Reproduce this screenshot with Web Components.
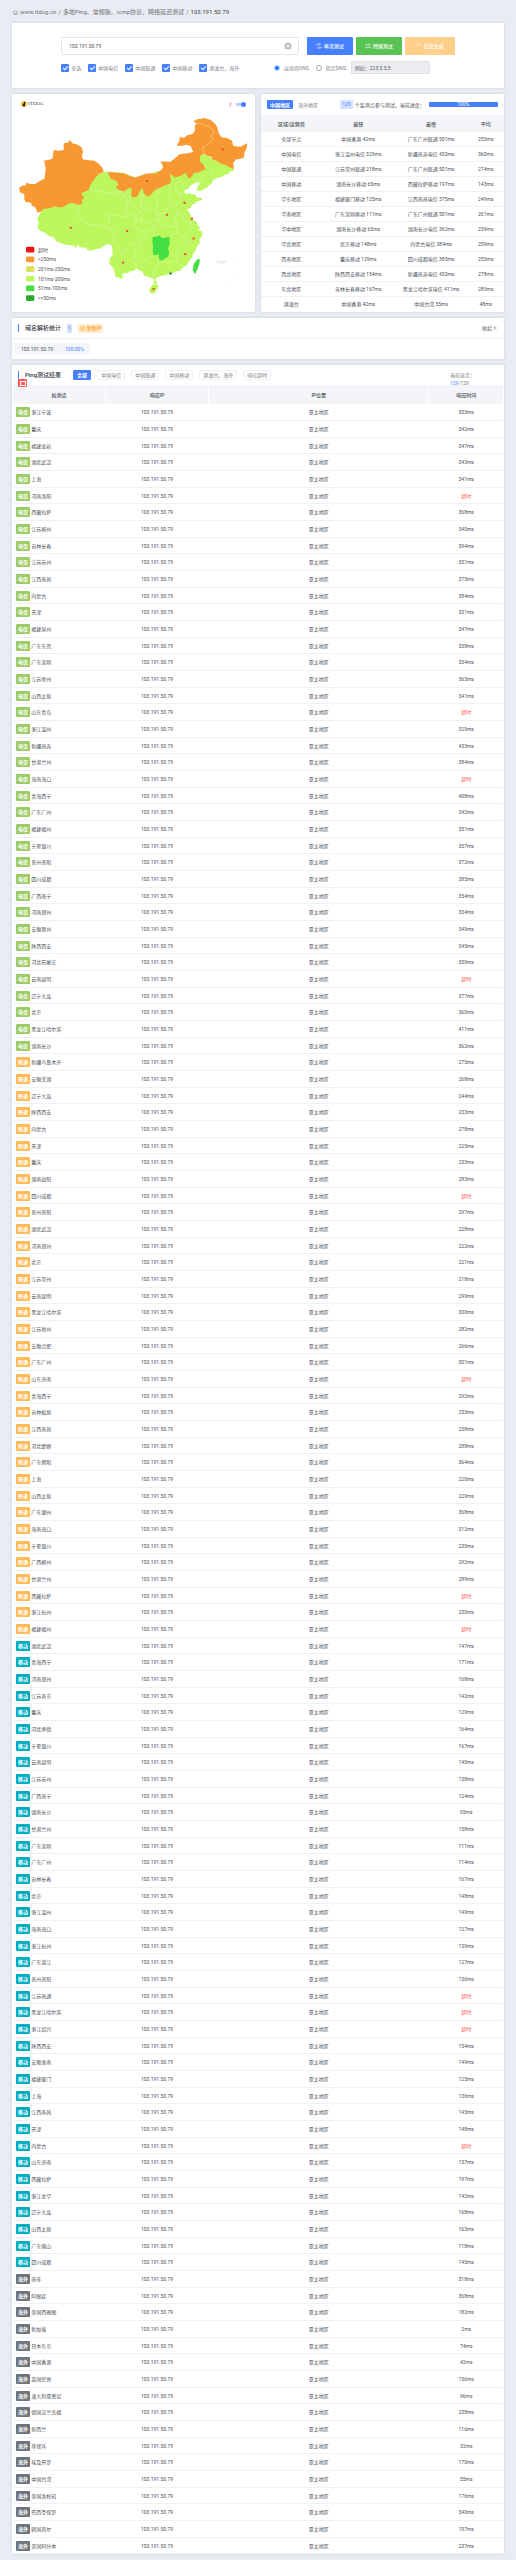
<!DOCTYPE html>
<html lang="zh-CN">
<head>
<meta charset="utf-8">
<meta name="viewport" content="width=device-width, initial-scale=1">
<title>103.191.50.79 Ping</title>
<style>
  :root {
    --blue: #467fff;
    --text: #4c5157;
    --muted: #7d8289;
    --head: #f3f5f8;
    --line: #eef1f5;
  }
  body {
    margin: 0;
    background: #e9edf3;
    color: var(--text);
    font: 5px/8px Roboto, "Noto Sans CJK SC", sans-serif;
  }
</style>
</head>
<body>
<ping-page></ping-page>

<script>
const reset = `
  * { box-sizing: border-box; }
  button, input { font: inherit; color: inherit; margin: 0; padding: 0; border: 0; }
  button { cursor: pointer; }
  table { width: 100%; border-spacing: 0; table-layout: fixed; }
  th, td { padding: 0; text-align: center; }
`;

class BaseElement extends HTMLElement {
  connectedCallback(){
    if(this.shadowRoot){
      return;
    }
    const template = document.createElement('template');
    template.innerHTML = `<style>${reset}</style>${this.render()}`;
    this.attachShadow({mode: 'open'});
    this.shadowRoot.appendChild(template.content.cloneNode(true));
    this.attachEvents();
  }
  attachEvents(){
  }
}

class PageCard extends BaseElement {
  render(){
    return `
      <style>
        :host { display: block; background: #fff; border-radius: 1px; box-shadow: 0 0 3px rgba(110, 130, 160, .3); }
      </style>
      <slot></slot>
    `;
  }
}

class SectionTitle extends BaseElement {
  render(){
    return `
      <style>
        :host { display: block; flex: none; border-left: 1px solid var(--blue); padding-left: 6px; }
        h2 { margin: 0; font-size: 6px; line-height: 8px; font-weight: 500; color: #33383e; }
      </style>
      <h2><slot></slot></h2>
    `;
  }
}

class PageBreadcrumb extends BaseElement {
  render(){
    return `
      <style>
        :host { display: block; font-size: 6px; padding: 8px 1px 7px; color: #6d7278; }
        nav { display: flex; align-items: center; gap: 2px; }
        a { color: inherit; text-decoration: none; display: flex; align-items: center; gap: 2px; }
        svg { width: 5px; height: 5px; }
        b { font-weight: 400; color: #3e4348; }
      </style>
      <nav>
        <a href="#"><svg viewBox="0 0 16 16" fill="none" stroke="currentColor" stroke-width="1.5"><path d="M1 7 8 1l7 6M3 6v9h10V6M5 11h6"/></svg>www.itdog.cn</a>
        <span>/</span>
        <a href="#">多地Ping、常规版、icmp协议、网络延迟测试</a>
        <span>/</span>
        <b>103.191.50.79</b>
      </nav>
    `;
  }
}

class PingForm extends BaseElement {
  render(){
    const isps = ['全选', '中国电信', '中国联通', '中国移动', '港澳台、海外'];
    return `
      <style>
        :host { display: block; padding: 14px 10% 14px; }
        .row { display: flex; align-items: center; }
        .box { flex: 1; display: flex; align-items: center; height: 18px; border: 1px solid #e2e5e9; border-radius: 1px; padding: 0 6px 0 7px; }
        .box input { flex: 1; min-width: 0; outline: 0; background: none; }
        .clear { background: none; width: 8px; height: 8px; display: flex; }
        .actions { display: flex; gap: 3px; margin-left: 8px; }
        .actions button { height: 18px; padding: 0 9px; border-radius: 1px; color: #fff; font-weight: 500; display: flex; align-items: center; gap: 2px; }
        .actions svg { width: 6px; height: 6px; }
        .single { background: var(--blue); }
        .keep { background: #59c453; }
        .actions .busy { background: #ffd08c; padding: 0 11px; }
        .options { margin-top: 6px; color: var(--muted); height: 13px; }
        .options label { display: flex; align-items: center; gap: 2px; margin-right: 7px; white-space: nowrap; }
        input[type=checkbox] { appearance: none; width: 8px; height: 8px; border-radius: 1px; background: var(--blue); display: grid; place-items: center; }
        input[type=checkbox]:checked::before { content: ""; width: 4px; height: 2px; border: solid #fff; border-width: 0 0 1px 1px; transform: rotate(-45deg); }
        input[type=radio] { appearance: none; width: 6px; height: 6px; border: 1px solid #aaa; border-radius: 50%; background: #fff; }
        input[type=radio]:checked { background: #1677ff; border-color: #c3dbff; }
        .dns { display: flex; flex: 1; justify-content: flex-end; align-items: center; padding-right: 25px; }
        .dns label { gap: 4px; }
        .dns label + label { margin-right: 4px; }
        .custom { width: 79px; height: 13px; background: #eaecef; border: 1px solid #dfe2e5; border-radius: 1px; padding: 0 3px; }
        .custom::placeholder { color: #5b6066; opacity: 1; }
      </style>
      <form>
        <div class="row">
          <div class="box">
            <input type="text" value="103.191.50.79" aria-label="IP">
            <button class="clear" type="button" aria-label="清空"><svg viewBox="0 0 16 16"><circle cx="8" cy="8" r="7" fill="#b9bcc0"/><path d="m5 5 6 6m0-6-6 6" stroke="#fff" stroke-width="2"/></svg></button>
          </div>
          <div class="actions">
            <button class="single" type="button"><svg viewBox="0 0 16 16" fill="none" stroke="currentColor" stroke-width="1.5"><path d="M2 7V3h9M9 1l3 2-3 2M14 9v4H5m2-2-3 2 3 2M7 7l2 2"/></svg>单次测试</button>
            <button class="keep" type="button"><svg viewBox="0 0 16 16" fill="none" stroke="currentColor" stroke-width="1.5"><path d="M2 9V4h10m-2-3 3 3-3 2M14 7v5H4m2-3-3 3 3 3"/></svg>持续测试</button>
            <button class="busy" type="button"><svg viewBox="0 0 16 16" fill="none" stroke="currentColor" stroke-width="2"><path d="M2 8a7 7 0 0 1 11-4"/></svg>正在生成</button>
          </div>
        </div>
        <div class="row options">
          ${isps.map(name => `<label><input type="checkbox" checked>${name}</label>`).join('')}
          <div class="dns">
            <label><input type="radio" name="dns" checked>运营商DNS</label>
            <label><input type="radio" name="dns">指定DNS:</label>
            <input class="custom" type="text" placeholder="例如：223.5.5.5" aria-label="DNS">
          </div>
        </div>
      </form>
    `;
  }
}

class LatencyMap extends BaseElement {
  render(){
    const legend = [
      ['#eb1414', '超时'],
      ['#f89832', '>250ms'],
      ['#dfdf5c', '201ms-250ms'],
      ['#bdf75e', '101ms-200ms'],
      ['#43df43', '51ms-100ms'],
      ['#29aa29', '<=50ms'],
    ];
    const alerts = [[668,176],[442,271],[554,336],[501,372],[576,384],[581,443],[556,490],[382,421],[213,411],[370,515],[461,594]];
    return `
      <style>
        :host { display: block; }
        header { display: flex; align-items: center; gap: 4px; height: 20px; padding: 0 9px; }
        .logo { flex: 1; display: flex; align-items: center; gap: 1px; font: 5px/8px "Liberation Serif", serif; color: #444; }
        .logo svg { width: 6px; height: 6px; }
        .pin { width: 3px; height: 5px; }
        .switch { appearance: none; width: 10px; height: 5px; display: flex; justify-content: flex-end; border-radius: 3px; background: linear-gradient(#b8ceff, #b8ceff) center / 100% 3px no-repeat; }
        .switch::before { content: ""; width: 5px; height: 5px; border-radius: 50%; background: var(--blue); }
        .map { display: block; width: 100%; }
        text { font-size: 15px; fill: #555; }
      </style>
      <header>
        <div class="logo"><svg viewBox="0 0 18 18"><circle cx="9" cy="9" r="9" fill="#f6c022"/><path d="M9 2h3v3l2 1-2 3v7H5V10l4-3z" fill="#222"/></svg>ITDOG</div>
        <svg class="pin" viewBox="0 0 9 15"><path d="M4 1v13M1 6h7" fill="none" stroke="#ff7d7d" stroke-width="2"/></svg>
        <input class="switch" type="checkbox" checked aria-label="标记">
      </header>
      <svg class="map" viewBox="37 70 728 593">
        <path fill="#bdf75e" d="M312 244 326 242 372 246 406 260 480 240 560 200 604 186 654 212 676 222 702 232 701 240 690 242 686 250 672 252 668 258 656 260 640 268 634 280 626 284 622 292 612 294 606 300 590 300 592 288 600 280 596 274 582 278 570 286 566 294 554 298 554 306 564 310 570 306 576 312 584 310 592 320 606 322 606 328 590 332 586 338 576 342 572 352 560 356 568 364 574 376 580 388 590 392 592 402 600 410 596 420 608 422 606 436 598 446 600 458 590 468 588 480 580 488 576 500 566 512 562 522 548 530 540 540 528 540 520 546 508 546 500 552 480 556 468 562 466 570 474 574 468 580 462 578 462 564 450 560 432 554 428 542 416 538 412 532 400 540 390 540 386 546 374 546 366 552 372 560 362 564 356 558 348 558 344 542 338 528 328 518 330 502 338 494 338 476 334 462 322 460 310 466 302 474 288 474 278 480 262 478 260 470 242 470 232 462 228 472 222 464 198 462 180 456 170 452 162 440 146 434 134 424 122 420 112 410 118 396 112 384 120 370 132 352 200 300Z"/>
        <path fill="#f89832" d="M58 292 68 284 78 284 80 276 92 280 106 280 122 270 134 264 138 234 134 212 130 210 146 208 158 204 162 178 176 180 192 178 192 158 204 156 210 148 218 158 234 162 246 170 250 184 246 196 250 206 284 210 298 220 308 232 312 244 298 250 286 262 276 276 270 286 268 298 246 306 246 312 254 320 246 328 248 340 234 342 216 336 200 342 194 348 176 350 166 346 150 352 132 354 122 364 112 364 108 350 96 344 94 336 78 334 74 326 74 310 62 306Z"/>
        <path fill="#f89832" d="M324 244 374 248 390 256 406 260 440 248 468 248 486 236 490 228 482 212 496 212 510 214 524 204 540 190 560 188 580 184 572 166 556 162 546 166 530 164 538 152 540 138 552 142 562 134 578 130 586 118 584 106 590 98 580 92 592 86 614 82 632 88 644 98 652 110 656 126 664 140 682 142 696 150 700 166 722 168 742 158 740 174 734 182 732 200 722 204 708 206 700 216 702 234 690 230 676 222 664 220 654 212 638 206 634 198 622 196 612 188 600 196 600 214 612 222 616 236 606 240 594 246 582 246 572 262 564 262 558 246 544 254 526 260 512 250 510 258 514 268 510 278 490 286 480 292 464 298 458 306 446 318 432 308 428 292 420 300 412 318 398 320 394 312 396 294 386 292 372 304 356 296 348 290 356 282 350 270 332 264Z"/>
        <path fill="#43df43" d="M458 438 470 438 478 434 488 442 508 438 510 460 504 474 508 482 506 496 496 502 486 510 478 506 476 490 462 494 458 482 460 468 458 456ZM594 504 600 506 598 520 592 536 586 550 578 538 582 518Z"/>
        <path fill="#bdf75e" d="M452 590 460 580 476 582 474 592 468 600 462 608 450 606 448 598Z"/>
        <path fill="#eee" d="M646 510h38l-10 8h-20zM700 510l6-2-2 8zM706 544h6v3zM684 570h5v3zM652 578h4v3z"/>
        <rect x="508" y="545" width="8" height="6" fill="#1f8f3a"/>
        <g fill="none" stroke="#e9f7d8" stroke-opacity=".75" stroke-width="1.5">
          <path d="M590 98 608 100 630 110 644 120 634 136 640 146 628 158 608 170 612 188"/>
          <path d="M268 298 300 302 322 308 352 302 378 318 386 340 380 358 376 378 352 372 326 372 330 390 320 404 318 412 296 400 274 404 248 390 236 374 234 342"/>
          <path d="M352 302 378 302 392 320 390 338 404 346 418 360 410 380 396 372 378 378M318 412 342 420 342 462"/>
          <path d="M428 308 424 330 440 334 448 348 444 362 424 350 422 330M418 360 428 372 424 390 408 388 410 380M424 390 446 396 456 386 476 390"/>
          <path d="M478 292 470 316 474 340 466 366 476 370 494 366 512 342 508 318 514 292 506 280M512 342 528 346 546 324 538 308 526 296 528 278 540 268 548 276 550 292"/>
          <path d="M538 308 554 306M474 368 476 390 488 402 514 410 532 402 524 382 534 370 530 352M534 370 552 374 568 362M532 402 530 424 546 438 560 430 572 416 570 396 552 390 550 374M570 396 590 402"/>
          <path d="M476 390 470 404 456 408 464 420 458 438M508 438 530 424M546 438 560 450 552 466 536 474 528 496 508 490M560 450 574 462 588 476M528 496 534 516 556 528"/>
          <path d="M408 388 402 404 420 420 436 424 450 420 436 440 424 446 422 466 408 476 404 494 420 514 440 508 460 494M342 462 358 470 364 490 380 480 390 458 410 456 424 446M404 494 394 508 408 520 410 536M478 506 472 526 460 544 462 562M486 510 498 516 520 510 534 516M592 246 606 262 590 274M612 222 630 236 642 264"/>
        </g>
        <g fill="#f0452a">
          ${alerts.map(([x, y]) => `<path d="M${x - 3} ${y - 3}h6v6h-6z"/>`).join('')}
        </g>
        ${legend.map(([color, label], i) => `
          <rect x="79" y="${468 + i * 29}" width="25" height="17" rx="4" fill="${color}"/>
          <text x="115" y="${482 + i * 29}">${label.replace('<', '&lt;')}</text>
        `).join('')}
      </svg>
    `;
  }
}

const regions = [
  ['全部节点', '中国香港 42ms', '广东广州联通 501ms', '255ms'],
  ['中国电信', '浙江温州电信 329ms', '新疆昌吉电信 433ms', '360ms'],
  ['中国联通', '江苏常州联通 218ms', '广东广州联通 501ms', '274ms'],
  ['中国移动', '湖南长沙移动 65ms', '西藏拉萨移动 197ms', '143ms'],
  ['华东地区', '福建厦门移动 125ms', '江西南昌电信 375ms', '249ms'],
  ['华南地区', '广东深圳移动 111ms', '广东广州联通 501ms', '261ms'],
  ['华中地区', '湖南长沙移动 65ms', '湖南长沙电信 362ms', '239ms'],
  ['华北地区', '北京移动 148ms', '内蒙古电信 384ms', '259ms'],
  ['西南地区', '重庆移动 129ms', '四川成都电信 385ms', '255ms'],
  ['西北地区', '陕西西安移动 154ms', '新疆昌吉电信 433ms', '278ms'],
  ['东北地区', '吉林长春移动 167ms', '黑龙江哈尔滨电信 411ms', '289ms'],
  ['港澳台', '中国香港 42ms', '中国台湾 55ms', '48ms'],
];

class RegionStats extends BaseElement {
  render(){
    return `
      <style>
        :host { display: block; }
        header { display: flex; align-items: center; height: 21px; padding: 0 6px; }
        header button { height: 9px; background: none; color: var(--muted); padding: 0 3px; border-radius: 1px; flex: none; }
        header button.on { background: var(--blue); color: #fff; font-weight: 700; margin-right: 2px; }
        .count { background: #d5e2ff; color: var(--blue); border-radius: 1px; padding: 0 2px; margin: 0 2px 0 auto; line-height: 9px; }
        .note { white-space: nowrap; margin-right: 4px; }
        .bar { flex: none; width: 30%; height: 5px; border-radius: 1px; background: var(--blue); color: #fff; text-align: center; line-height: 5px; }
        th { height: 17px; background: var(--head); font-weight: 500; }
        td { height: 15px; border-bottom: 1px solid var(--line); white-space: nowrap; }
        tr:last-child td { border-bottom-color: transparent; }
      </style>
      <header>
        <button class="on" type="button">中国地区</button>
        <button type="button">海外地区</button>
        <span class="count">129</span>
        <span class="note">个监测点参与测试，当前进度：</span>
        <div class="bar" role="progressbar" aria-valuenow="100">100%</div>
      </header>
      <table>
        <colgroup><col style="width:25%"><col style="width:30%"><col style="width:30%"><col style="width:15%"></colgroup>
        <thead><tr><th>区域/运营商</th><th>最快</th><th>最慢</th><th>平均</th></tr></thead>
        <tbody>
          ${regions.map(row => `<tr>${row.map(cell => `<td>${cell}</td>`).join('')}</tr>`).join('')}
        </tbody>
      </table>
    `;
  }
}

class DnsStats extends BaseElement {
  render(){
    return `
      <style>
        :host { display: block; }
        header { display: flex; align-items: center; height: 21px; padding: 0 7px 0 6px; border-bottom: 1px solid var(--line); }
        button { display: flex; align-items: center; gap: 2px; }
        svg { width: 5px; height: 5px; }
        .count { background: #d5e2ff; color: var(--blue); border-radius: 1px; padding: 0 1px; line-height: 9px; margin: 0 6px; }
        .copy { background: #ffeacb; color: #ff9d1c; border-radius: 1px; height: 9px; padding: 0 2px; font-weight: 500; }
        .fold { background: none; margin-left: auto; gap: 1px; }
        .fold svg { width: 4px; height: 4px; }
        .body { display: flex; padding: 4px 3px 5px; }
        .ip { display: flex; gap: 12px; background: var(--head); padding: 2px 6px 1px; }
        .ip a { color: inherit; text-decoration: none; }
        .ip span { color: var(--blue); }
      </style>
      <header>
        <section-title>域名解析统计</section-title>
        <span class="count">1</span>
        <button class="copy" type="button"><svg viewBox="0 0 16 16" fill="none" stroke="currentColor" stroke-width="1.5"><path d="M1 1h9v9H1zM10 5h5v10H5v-5"/></svg>复制IP</button>
        <button class="fold" type="button">收起<svg viewBox="0 0 12 12" fill="none" stroke="currentColor" stroke-width="1.5"><path d="m2 6 4-4 4 4M2 11l4-4 4 4"/></svg></button>
      </header>
      <div class="body">
        <div class="ip"><a href="#">103.191.50.79</a><span>100.00%</span></div>
      </div>
    `;
  }
}

class CarrierTag extends BaseElement {
  render(){
    return `
      <style>
        :host { display: inline-block; line-height: 10px; padding: 0 2px; border-radius: 1px; color: #fff; font-weight: 700; background: #9ccc65; }
        :host([type="联通"]) { background: #ffba57; }
        :host([type="移动"]) { background: #00acc1; }
        :host([type="海外"]) { background: #6c757d; }
      </style>
      ${this.getAttribute('type')}
    `;
  }
}

// "地点 毫秒"; "-" means no reply
const probes = {
  '电信': '浙江宁波 353,重庆 342,福建龙岩 347,湖北武汉 343,上海 341,河南洛阳 -,西藏拉萨 368,江苏扬州 340,吉林长春 394,江苏苏州 351,江西南昌 375,内蒙古 384,天津 331,福建泉州 347,广东东莞 338,广东深圳 334,江苏徐州 363,山西太原 341,山东青岛 -,浙江温州 329,新疆昌吉 433,甘肃兰州 384,海南海口 -,青海西宁 408,广东广州 342,福建福州 351,宁夏银川 357,贵州贵阳 372,四川成都 385,广西南宁 354,河南郑州 334,安徽滁州 349,陕西西安 345,河北石家庄 359,云南昆明 -,辽宁大连 377,北京 360,黑龙江哈尔滨 411,湖南长沙 362',
  '联通': '新疆乌鲁木齐 275,安徽芜湖 268,辽宁大连 244,陕西西安 233,内蒙古 278,天津 225,重庆 253,湖南益阳 283,四川成都 -,贵州贵阳 297,湖北武汉 228,河南郑州 222,北京 221,江苏常州 218,云南昆明 299,黑龙江哈尔滨 300,江苏徐州 282,安徽合肥 266,广东广州 501,山东济南 -,青海西宁 292,吉林松原 253,江西南昌 238,河北邯郸 288,广东揭阳 364,上海 220,山西太原 229,广东潮州 368,海南海口 312,宁夏银川 230,广西柳州 292,甘肃兰州 289,西藏拉萨 -,浙江杭州 230,福建福州 -',
  '移动': '湖北武汉 147,青海西宁 171,河南郑州 168,江苏南京 142,重庆 129,河北承德 164,宁夏银川 167,云南昆明 140,江苏苏州 138,广西南宁 124,湖南长沙 65,甘肃兰州 158,广东深圳 111,广东广州 114,吉林长春 167,北京 148,浙江温州 149,海南海口 127,浙江杭州 139,广东湛江 127,贵州贵阳 136,江苏南通 -,黑龙江哈尔滨 -,浙江绍兴 -,陕西西安 154,安徽淮南 149,福建厦门 125,上海 136,江西南昌 145,天津 148,内蒙古 -,山东济南 157,西藏拉萨 197,浙江金华 142,辽宁大连 168,山西太原 163,广东佛山 118,四川成都 145',
  '海外': '南非 318,阿根廷 368,美国西雅图 182,新加坡 2,日本东京 74,中国香港 42,英国伦敦 156,澳大利亚悉尼 96,德国法兰克福 238,新西兰 116,菲律宾 32,埃及开罗 170,中国台湾 55,美国洛杉矶 176,巴西圣保罗 340,韩国首尔 107,美国阿什本 237',
};

class PingResults extends BaseElement {
  rows(){
    return Object.keys(probes).map(type => probes[type].split(',').map(item => {
      const [place, ms] = item.split(' ');
      const time = ms === '-' ? '<td class="timeout">超时</td>' : `<td>${ms}ms</td>`;
      return `<tr><td class="place"><carrier-tag type="${type}"></carrier-tag> ${place}</td><td>103.191.50.79</td><td>亚太地区</td>${time}</tr>`;
    }).join('')).join('');
  }
  render(){
    const filters = ['全部', '中国电信', '中国联通', '中国移动', '港澳台、海外', '响应超时'];
    return `
      <style>
        :host { display: block; position: relative; padding: 0 1px; }
        header { display: flex; align-items: flex-start; height: 20px; padding: 5px 5px 0; }
        section-title { margin: 1px 12px 0 0; }
        .filters { display: flex; gap: 6px; flex: 1; }
        .filters button { height: 10px; padding: 0 3px; border: 1px solid var(--line); border-radius: 1px; background: #fff; color: var(--muted); line-height: 8px; }
        .filters button.on { background: var(--blue); border-color: var(--blue); color: #fff; font-weight: 700; }
        .shown { width: 10%; margin-top: 1px; color: var(--muted); }
        .shown b { color: var(--blue); font-weight: 400; }
        .full { position: absolute; left: 6px; top: 14px; width: 9px; height: 8px; background: #ff5d5d; border-radius: 1px; display: grid; place-items: center; }
        .full::before { content: ""; width: 4px; height: 3px; border: 1px solid #fff; }
        th { height: 19px; background: var(--head); font-weight: 500; }
        td { height: 17px; border-bottom: 1px solid var(--line); line-height: 10px; }
        /* every third row is a pixel shorter, so that three rows take 50px */
        tr:nth-child(3n) td { height: 16px; }
        th:not(:last-child), td:not(:last-child) { border-right: 1px solid #fff; }
        .place { text-align: left; padding-left: 3px; }
        .timeout { color: #ff5252; }
      </style>
      <header>
        <section-title>Ping测试结果</section-title>
        <div class="filters">
          ${filters.map((name, i) => `<button type="button"${i ? '' : ' class="on"'}>${name}</button>`).join('')}
        </div>
        <div class="shown">当前显示：<br><b>129</b>/129</div>
      </header>
      <button class="full" type="button" aria-label="全屏"></button>
      <table>
        <colgroup><col style="width:19%"><col style="width:21%"><col style="width:45%"><col style="width:15%"></colgroup>
        <thead><tr><th>检测点</th><th>响应IP</th><th>IP位置</th><th>响应时间</th></tr></thead>
        <tbody>${this.rows()}</tbody>
      </table>
    `;
  }
  attachEvents(){
    const buttons = this.shadowRoot.querySelectorAll('.filters button');
    buttons.forEach(button => button.addEventListener('click', () => {
      buttons.forEach(other => other.classList.toggle('on', other === button));
    }));
  }
}

class PingPage extends BaseElement {
  render(){
    return `
      <style>
        :host { display: block; padding: 0 12px 6px; }
        main { display: grid; gap: 6px; }
        .halves { display: grid; grid-template-columns: 1fr 1fr; gap: 6px; }
      </style>
      <page-breadcrumb></page-breadcrumb>
      <main>
        <page-card><ping-form></ping-form></page-card>
        <div class="halves">
          <page-card><latency-map></latency-map></page-card>
          <page-card><region-stats></region-stats></page-card>
        </div>
        <page-card><dns-stats></dns-stats></page-card>
        <page-card><ping-results></ping-results></page-card>
      </main>
    `;
  }
}

const elements = {
  'page-card': PageCard,
  'section-title': SectionTitle,
  'page-breadcrumb': PageBreadcrumb,
  'ping-form': PingForm,
  'latency-map': LatencyMap,
  'region-stats': RegionStats,
  'dns-stats': DnsStats,
  'carrier-tag': CarrierTag,
  'ping-results': PingResults,
  'ping-page': PingPage,
};
Object.keys(elements).forEach(name => customElements.define(name, elements[name]));
</script>
</body>
</html>
